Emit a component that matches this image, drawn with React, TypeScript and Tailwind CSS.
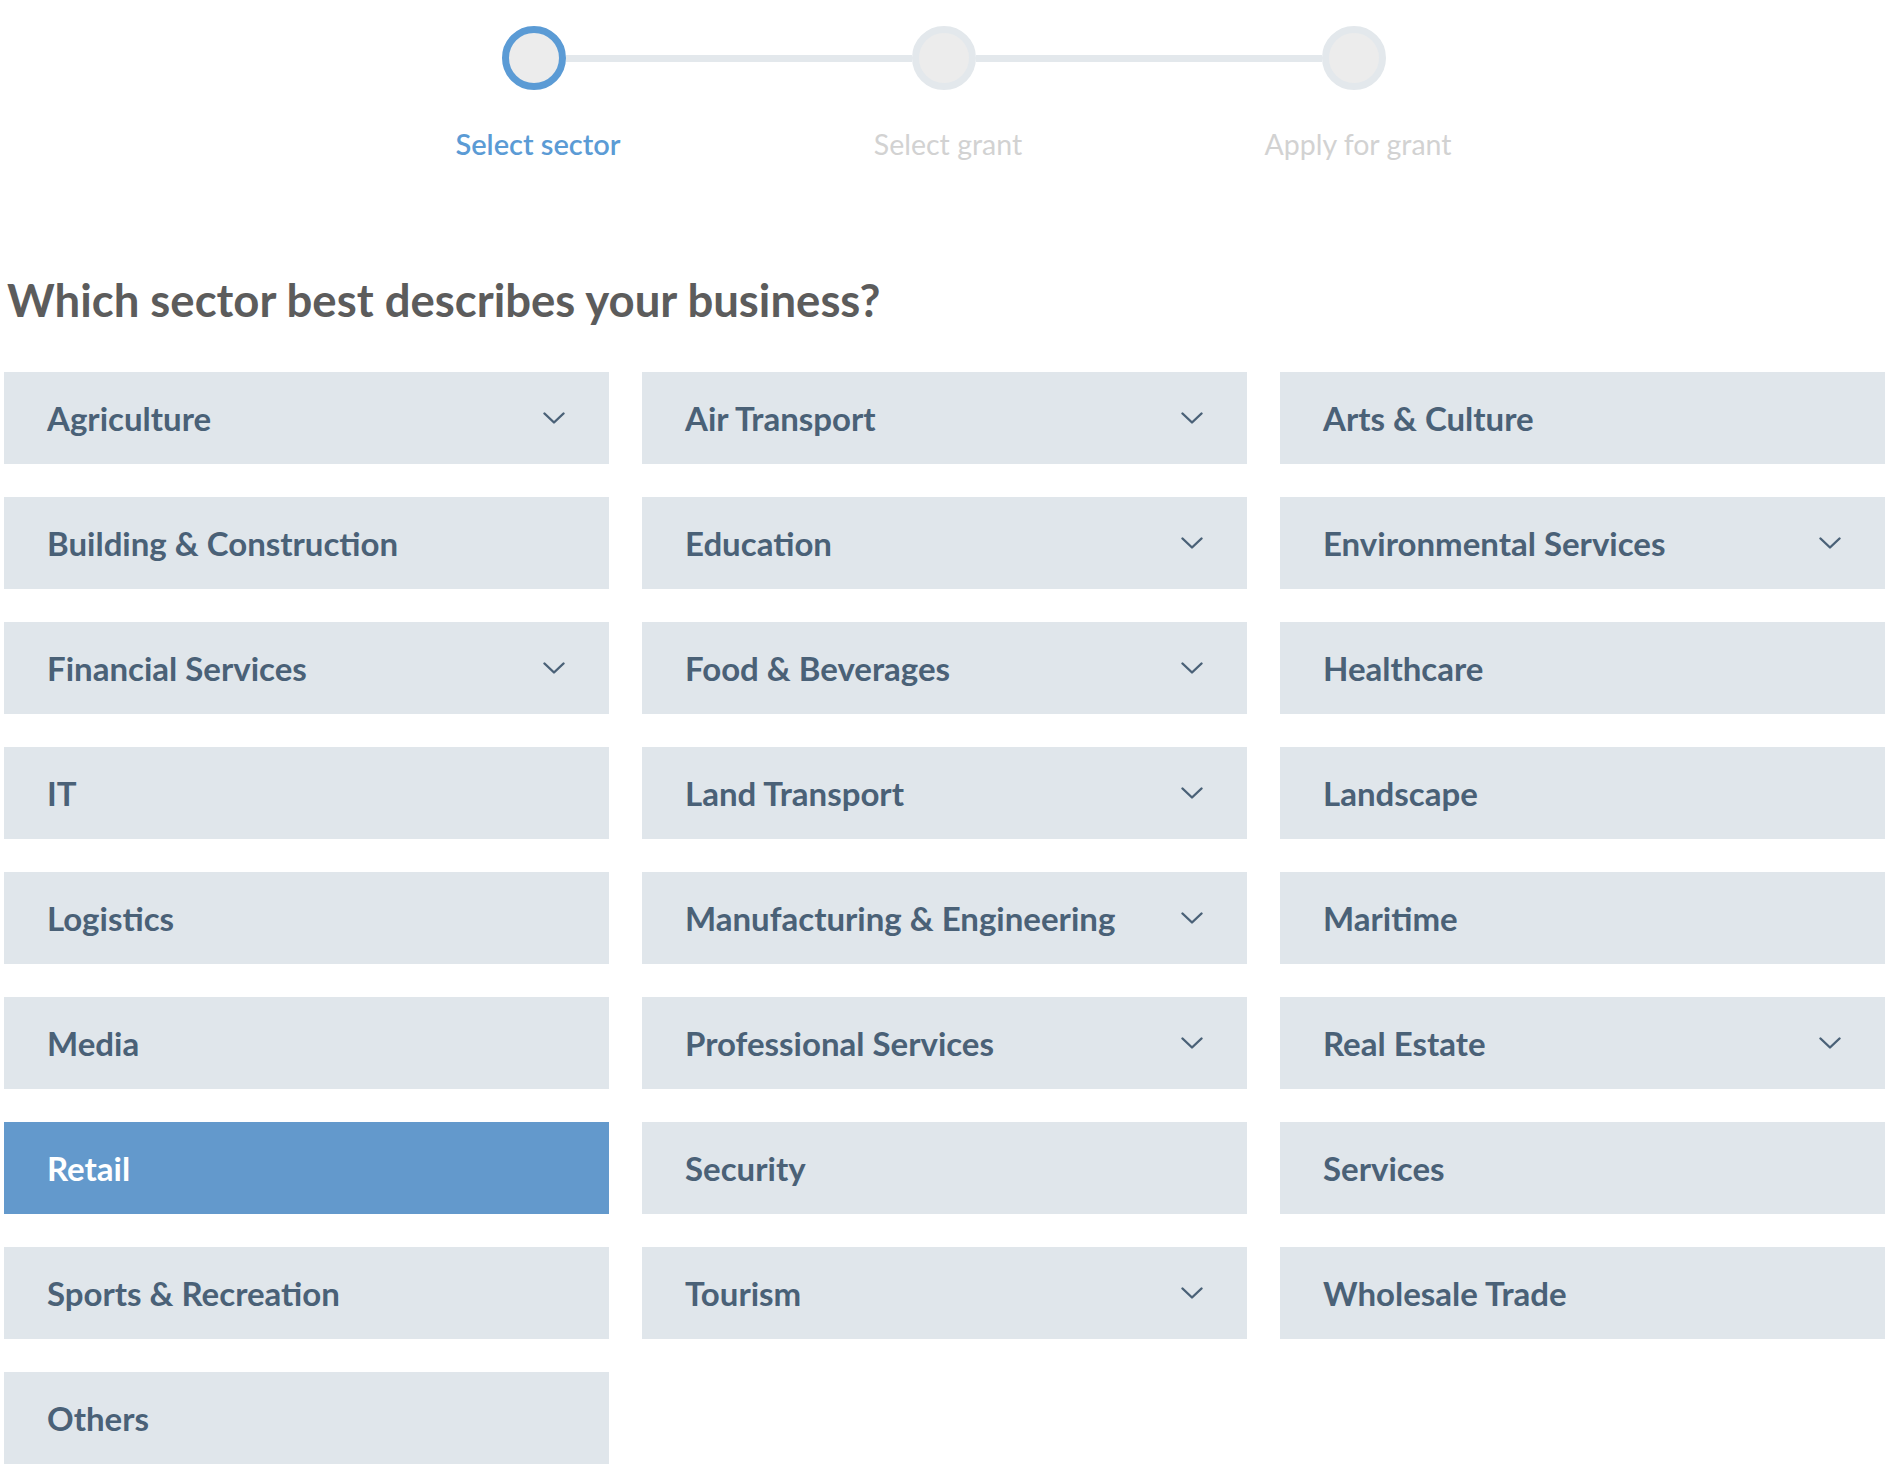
import React from "react";

type Sector = { name: string; sub?: boolean };

const sectors: Sector[] = [
  { name: "Agriculture", sub: true },
  { name: "Air Transport", sub: true },
  { name: "Arts & Culture" },
  { name: "Building & Construction" },
  { name: "Education", sub: true },
  { name: "Environmental Services", sub: true },
  { name: "Financial Services", sub: true },
  { name: "Food & Beverages", sub: true },
  { name: "Healthcare" },
  { name: "IT" },
  { name: "Land Transport", sub: true },
  { name: "Landscape" },
  { name: "Logistics" },
  { name: "Manufacturing & Engineering", sub: true },
  { name: "Maritime" },
  { name: "Media" },
  { name: "Professional Services", sub: true },
  { name: "Real Estate", sub: true },
  { name: "Retail" },
  { name: "Security" },
  { name: "Services" },
  { name: "Sports & Recreation" },
  { name: "Tourism", sub: true },
  { name: "Wholesale Trade" },
  { name: "Others" },
];

const steps = ["Select sector", "Select grant", "Apply for grant"];

function Chevron() {
  return (
    <svg width="22" height="12" viewBox="0 0 22 12" fill="none" className="shrink-0">
      <polyline
        points="1.5,1.5 11,10.5 20.5,1.5"
        stroke="#4a6177"
        strokeWidth="2.4"
        strokeLinecap="round"
        strokeLinejoin="round"
      />
    </svg>
  );
}

function Stepper({ current }: { current: number }) {
  return (
    <div>
      <div className="flex items-center ml-[498px] pt-[26px]">
        {steps.map((s, i) => (
          <React.Fragment key={s}>
            {i > 0 && <div className="w-[346px] h-[7px] bg-[#e3e8ec]" />}
            <div
              className={
                i === current
                  ? "w-16 h-16 rounded-full border-[7px] border-[#5b9bd5] bg-[#ececec]"
                  : "w-16 h-16 rounded-full border-[7px] border-[#e3e8ec] bg-[#ececec]"
              }
            />
          </React.Fragment>
        ))}
      </div>
      <div className="flex ml-[384px] gap-[110px] mt-[37px]">
        {steps.map((s, i) => (
          <div
            key={s}
            className={
              i === current
                ? "w-[300px] text-center text-[29px] leading-[34px] font-semibold text-[#5b9bd5]"
                : "w-[300px] text-center text-[28.5px] leading-[34px] text-[#d2d2d2]"
            }
          >
            {s}
          </div>
        ))}
      </div>
    </div>
  );
}

export default function App() {
  const selected = "Retail";
  return (
    <div
      className="bg-white min-h-[1472px] w-[1892px] pl-[4px]"
      style={{ fontFamily: "Lato, 'Noto Sans', sans-serif" }}
    >
      <Stepper current={0} />

      <h1 className="mt-[111px] text-[45.5px] leading-[56px] font-bold text-[#5c5c5c] pl-[3px]">
        Which sector best describes your business?
      </h1>

      <div className="grid grid-cols-3 gap-[33px] w-[1881px] mt-[44px]">
        {sectors.map((s) => {
          const active = s.name === selected;
          return (
            <button
              key={s.name}
              className={
                active
                  ? "h-[92px] flex items-center justify-between pl-[43px] pr-[44px] bg-[#6399cc] text-white text-left"
                  : "h-[92px] flex items-center justify-between pl-[43px] pr-[44px] bg-[#e0e6eb] text-[#4a6177] text-left"
              }
            >
              <span className="text-[33px] font-bold leading-none">{s.name}</span>
              {s.sub && <Chevron />}
            </button>
          );
        })}
      </div>
    </div>
  );
}
